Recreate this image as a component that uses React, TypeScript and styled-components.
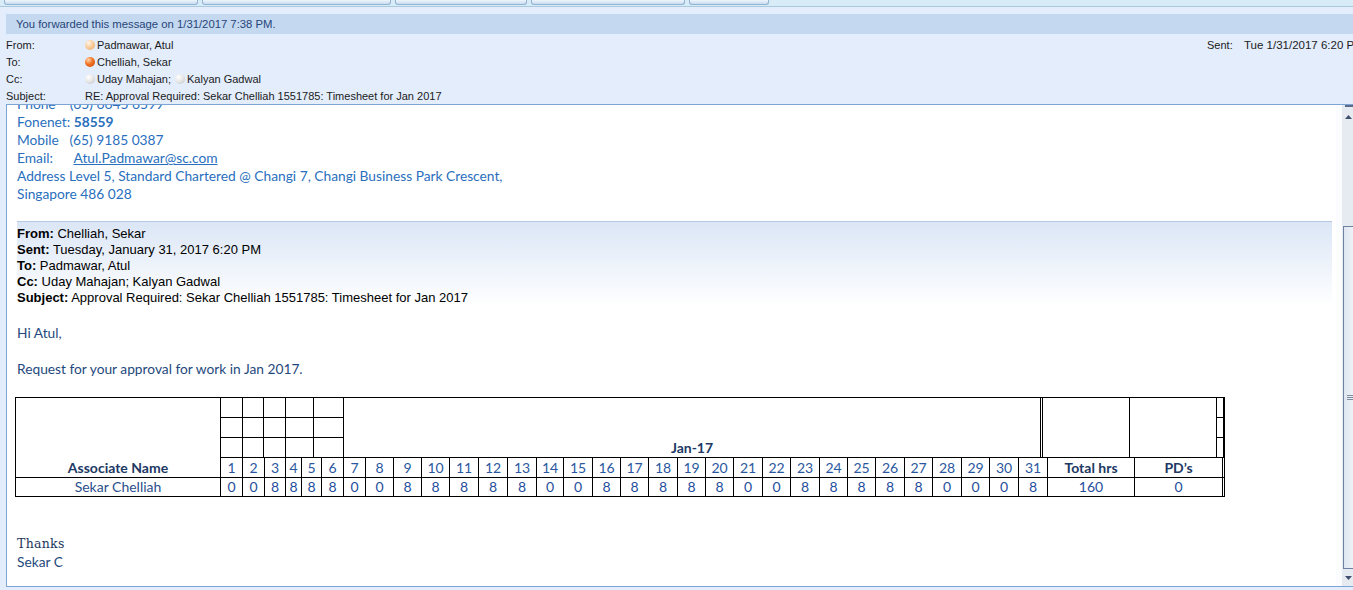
import React from "react";
import styled, { createGlobalStyle } from "styled-components";

const GlobalStyle = createGlobalStyle`
  html, body { margin: 0; padding: 0; background: #e3edfb; overflow: hidden; }
  body { font-family: "Liberation Sans", Arial, sans-serif; }
`;

const Window = styled.div`
  width: 1353px;
  height: 590px;
  display: flex;
  flex-direction: column;
  overflow: hidden;
  background: #e3edfb;
`;

const TabStrip = styled.div`
  height: 6px;
  flex: none;
  display: flex;
  gap: 4px;
  padding-left: 4px;
  background: #d8ecf7;
  border-bottom: 1px solid #a9c9de;
`;

const Tab = styled.div<{ $w: number }>`
  width: ${(p) => p.$w}px;
  height: 5px;
  box-sizing: border-box;
  border: 1px solid #93b3d3;
  border-top: none;
  border-radius: 0 0 3px 3px;
  background: linear-gradient(#eef5fc, #c8dcef);
`;

const Header = styled.div`
  height: 97px;
  box-sizing: border-box;
  padding-top: 7px;
  flex: none;
  font-family: "Liberation Sans", Arial, sans-serif;
  font-size: 11px;
  color: #1b1b1b;
`;

const Banner = styled.div`
  margin-left: 6px;
  height: 20px;
  background: #c4d8ef;
  color: #26467a;
  padding-left: 10px;
  display: flex;
  align-items: center;
  margin-bottom: 2px;
  font-size: 11.3px;
`;

const FieldRow = styled.div`
  height: 17px;
  display: grid;
  grid-template-columns: 79px 1122px 36px max-content;
  align-items: center;
  padding-left: 6px;
  white-space: nowrap;
`;

const FieldLabel = styled.span``;

const FieldValue = styled.span`
  display: flex;
  align-items: center;
`;

const SentValue = styled.span`
  padding-left: 1px;
  font-size: 11.5px;
`;

const Presence = styled.span<{ $tone: "away" | "busy" | "off" }>`
  width: 10px;
  height: 10px;
  border-radius: 50%;
  margin-right: 2px;
  flex: none;
  background: ${(p) =>
    p.$tone === "busy"
      ? "radial-gradient(circle at 35% 30%, #ffd8b0 0, #f2701f 45%, #c9480a 100%)"
      : p.$tone === "away"
      ? "radial-gradient(circle at 35% 30%, #fff6ec 0, #f8c995 50%, #e8a868 100%)"
      : "radial-gradient(circle at 35% 30%, #ffffff 0, #e6e6e6 50%, #bcbcbc 100%)"};
`;

const Sep = styled.span`
  margin-right: 4px;
`;

const BodyFrame = styled.div`
  height: 483px;
  box-sizing: border-box;
  margin-left: 6px;
  border: 1px solid #7ea3d5;
  border-right: none;
  background: #fff;
  display: flex;
  flex: none;
`;

const Content = styled.div`
  flex: 1;
  min-width: 0;
  overflow: hidden;
`;

const Inner = styled.div`
  margin-top: -10px;
  padding-left: 10px;
  padding-right: 4px;
  font-family: Lato, "Liberation Sans", sans-serif;
  font-size: 13.75px;
  line-height: 18px;
`;

const SigLine = styled.div`
  color: #2a6fbd;
  white-space: pre;
`;

const Strong = styled.b`
  font-weight: 700;
`;

const MailLink = styled.a`
  color: #2a6fbd;
  text-decoration: underline;
`;

const ForwardHeader = styled.div`
  margin-top: 18px;
  border-top: 1px solid #b7c8e4;
  padding-top: 4px;
  background: linear-gradient(#dbe6f6, #ffffff);
  font-family: "Liberation Sans", Arial, sans-serif;
  font-size: 13px;
  line-height: 16px;
  color: #000;
`;

const Para = styled.div<{ $gap?: number }>`
  margin-top: ${(p) => p.$gap ?? 0}px;
  color: #1f497d;
`;

const Sheet = styled.div<{ $cols: string }>`
  margin-top: 19px;
  margin-left: -2px;
  display: grid;
  width: max-content;
  grid-template-columns: ${(p) => p.$cols};
  grid-template-rows: 20px 20px 20px 20px 19px;
  border-top: 1px solid #000;
  border-left: 1px solid #000;
  font-family: Lato, "Liberation Sans", sans-serif;
  font-size: 14px;
  line-height: 16px;
`;

const Cell = styled.div<{ $bold?: boolean; $tone?: string }>`
  box-sizing: border-box;
  border-right: 1px solid #000;
  border-bottom: 1px solid #000;
  display: flex;
  align-items: center;
  justify-content: center;
  font-weight: ${(p) => (p.$bold ? 700 : 400)};
  color: ${(p) => p.$tone ?? "#2a58a0"};
  white-space: nowrap;
`;

const NameHead = styled(Cell)`
  grid-column: 1;
  grid-row: 1 / 5;
  align-items: flex-end;
  padding-bottom: 1px;
`;

const Band = styled.div`
  grid-column: 2 / -1;
  grid-row: 1 / 4;
  display: flex;
  border-bottom: 1px solid #000;
`;

const SmallGrid = styled.div`
  display: grid;
  grid-template-columns: 22px 21px 22px 28px 30px;
  grid-template-rows: 20px 20px 19px;
`;

const SmallCell = styled.div<{ $open?: boolean }>`
  box-sizing: border-box;
  border-right: 1px solid #000;
  border-bottom: ${(p) => (p.$open ? "none" : "1px solid #000")};
`;

const MonthCell = styled.div`
  width: 699px;
  box-sizing: border-box;
  border-right: 3px double #000;
  display: flex;
  align-items: flex-end;
  justify-content: center;
  font-weight: 700;
  color: #203864;
  padding-bottom: 1px;
`;

const BlankCell = styled.div<{ $w: number }>`
  width: ${(p) => p.$w}px;
  box-sizing: border-box;
  border-right: 1px solid #000;
`;

const EdgeStack = styled.div`
  width: 8px;
  box-sizing: border-box;
  border-right: 1px solid #000;
  display: grid;
  grid-template-rows: 20px 20px 19px;
`;

const Closing = styled.div`
  margin-top: 38px;
`;

const Thanks = styled.div`
  font-family: "DejaVu Serif", "Liberation Serif", serif;
  font-size: 12.5px;
  color: #22355a;
  letter-spacing: 0.3px;
`;

const Signoff = styled.div`
  color: #1f497d;
`;

const Scrollbar = styled.div`
  width: 17px;
  flex: none;
  display: flex;
  flex-direction: column;
  background: linear-gradient(90deg, #fbfcfe 0 6px, #e6ebf2 6px);
`;

const ScrollButton = styled.div<{ $top?: boolean }>`
  height: ${(p) => (p.$top ? 21 : 17)}px;
  flex: none;
  display: flex;
  justify-content: flex-end;
  align-items: center;
  padding-right: 1px;
  box-sizing: border-box;
  margin-left: 9px;
  border-top: ${(p) => (p.$top ? "2px solid #5b6c8b" : "none")};
`;

const Thumb = styled.div`
  flex: 1;
  margin: 100px 0 0 7px;
  border: 1px solid #6f81a3;
  border-right: none;
  background: linear-gradient(90deg, #dfe6f0, #eef2f8);
  display: flex;
  align-items: center;
  justify-content: flex-end;
`;

const Grip = styled.div`
  width: 6px;
  height: 5px;
  background: repeating-linear-gradient(#7d8aa0 0 1px, transparent 1px 2px);
`;

const widths = [22, 22, 21, 16, 20, 22, 22, 28, 28, 28, 29, 29, 29, 27, 29, 28, 28, 29, 28, 28, 29, 28, 29, 28, 28, 29, 28, 29, 28, 29, 29];
const hours = [0, 0, 8, 8, 8, 8, 0, 0, 8, 8, 8, 8, 8, 0, 0, 8, 8, 8, 8, 8, 0, 0, 8, 8, 8, 8, 8, 0, 0, 0, 8];
const cols = `205px ${widths.map((w) => `${w}px`).join(" ")} 87px 88px 2px`;

const Arrow = ({ up }: { up?: boolean }) => (
  <svg width="7" height="4" viewBox="0 0 7 4">
    <path d={up ? "M0 4 L3.5 0 L7 4 Z" : "M0 0 L3.5 4 L7 0 Z"} fill="#3f4f6d" />
  </svg>
);

export default function App() {
  return (
    <Window>
      <GlobalStyle />
      <TabStrip>
        {[194, 189, 132, 154, 80].map((w, i) => (
          <Tab key={i} $w={w} />
        ))}
      </TabStrip>
      <Header>
        <Banner>You forwarded this message on 1/31/2017 7:38 PM.</Banner>
        <FieldRow>
          <FieldLabel>From:</FieldLabel>
          <FieldValue>
            <Presence $tone="away" />
            Padmawar, Atul
          </FieldValue>
          <FieldLabel>Sent:</FieldLabel>
          <SentValue>Tue 1/31/2017 6:20 PM</SentValue>
        </FieldRow>
        <FieldRow>
          <FieldLabel>To:</FieldLabel>
          <FieldValue>
            <Presence $tone="busy" />
            Chelliah, Sekar
          </FieldValue>
        </FieldRow>
        <FieldRow>
          <FieldLabel>Cc:</FieldLabel>
          <FieldValue>
            <Presence $tone="off" />
            <Sep>Uday Mahajan;</Sep>
            <Presence $tone="off" />
            Kalyan Gadwal
          </FieldValue>
        </FieldRow>
        <FieldRow>
          <FieldLabel>Subject:</FieldLabel>
          <FieldValue>RE: Approval Required: Sekar Chelliah 1551785: Timesheet for Jan 2017</FieldValue>
        </FieldRow>
      </Header>
      <BodyFrame>
        <Content>
          <Inner>
            <SigLine>{"Phone    (65) 6645 6599"}</SigLine>
            <SigLine>
              Fonenet: <Strong>58559</Strong>
            </SigLine>
            <SigLine>{"Mobile   (65) 9185 0387"}</SigLine>
            <SigLine>
              {"Email:      "}
              <MailLink href="#">Atul.Padmawar@sc.com</MailLink>
            </SigLine>
            <SigLine>Address Level 5, Standard Chartered @ Changi 7, Changi Business Park Crescent,</SigLine>
            <SigLine>Singapore 486 028</SigLine>
            <ForwardHeader>
              <div>
                <Strong>From:</Strong> Chelliah, Sekar
              </div>
              <div>
                <Strong>Sent:</Strong> Tuesday, January 31, 2017 6:20 PM
              </div>
              <div>
                <Strong>To:</Strong> Padmawar, Atul
              </div>
              <div>
                <Strong>Cc:</Strong> Uday Mahajan; Kalyan Gadwal
              </div>
              <div>
                <Strong>Subject:</Strong> Approval Required: Sekar Chelliah 1551785: Timesheet for Jan 2017
              </div>
            </ForwardHeader>
            <Para $gap={18}>Hi Atul,</Para>
            <Para $gap={18}>Request for your approval for work in Jan 2017.</Para>
            <Sheet $cols={cols}>
              <NameHead $bold $tone="#203864">Associate Name</NameHead>
              <Band>
                <SmallGrid>
                  {Array.from({ length: 15 }).map((_, i) => (
                    <SmallCell key={i} $open={i >= 10} />
                  ))}
                </SmallGrid>
                <MonthCell>Jan-17</MonthCell>
                <BlankCell $w={87} />
                <BlankCell $w={87} />
                <EdgeStack>
                  <SmallCell />
                  <SmallCell />
                  <SmallCell $open />
                </EdgeStack>
              </Band>
              {widths.map((_, i) => (
                <Cell key={`d${i}`}>{i + 1}</Cell>
              ))}
              <Cell $bold $tone="#203864">Total hrs</Cell>
              <Cell $bold $tone="#203864">PD’s</Cell>
              <Cell />
              <Cell $tone="#2b4f8a">Sekar Chelliah</Cell>
              {hours.map((h, i) => (
                <Cell key={`h${i}`} $tone="#1f4e9c">{h}</Cell>
              ))}
              <Cell $tone="#1f4e9c">160</Cell>
              <Cell $tone="#1f4e9c">0</Cell>
              <Cell />
            </Sheet>
            <Closing>
              <Thanks>Thanks</Thanks>
              <Signoff>Sekar C</Signoff>
            </Closing>
          </Inner>
        </Content>
        <Scrollbar>
          <ScrollButton $top>
            <Arrow up />
          </ScrollButton>
          <Thumb>
            <Grip />
          </Thumb>
          <ScrollButton>
            <Arrow />
          </ScrollButton>
        </Scrollbar>
      </BodyFrame>
    </Window>
  );
}
